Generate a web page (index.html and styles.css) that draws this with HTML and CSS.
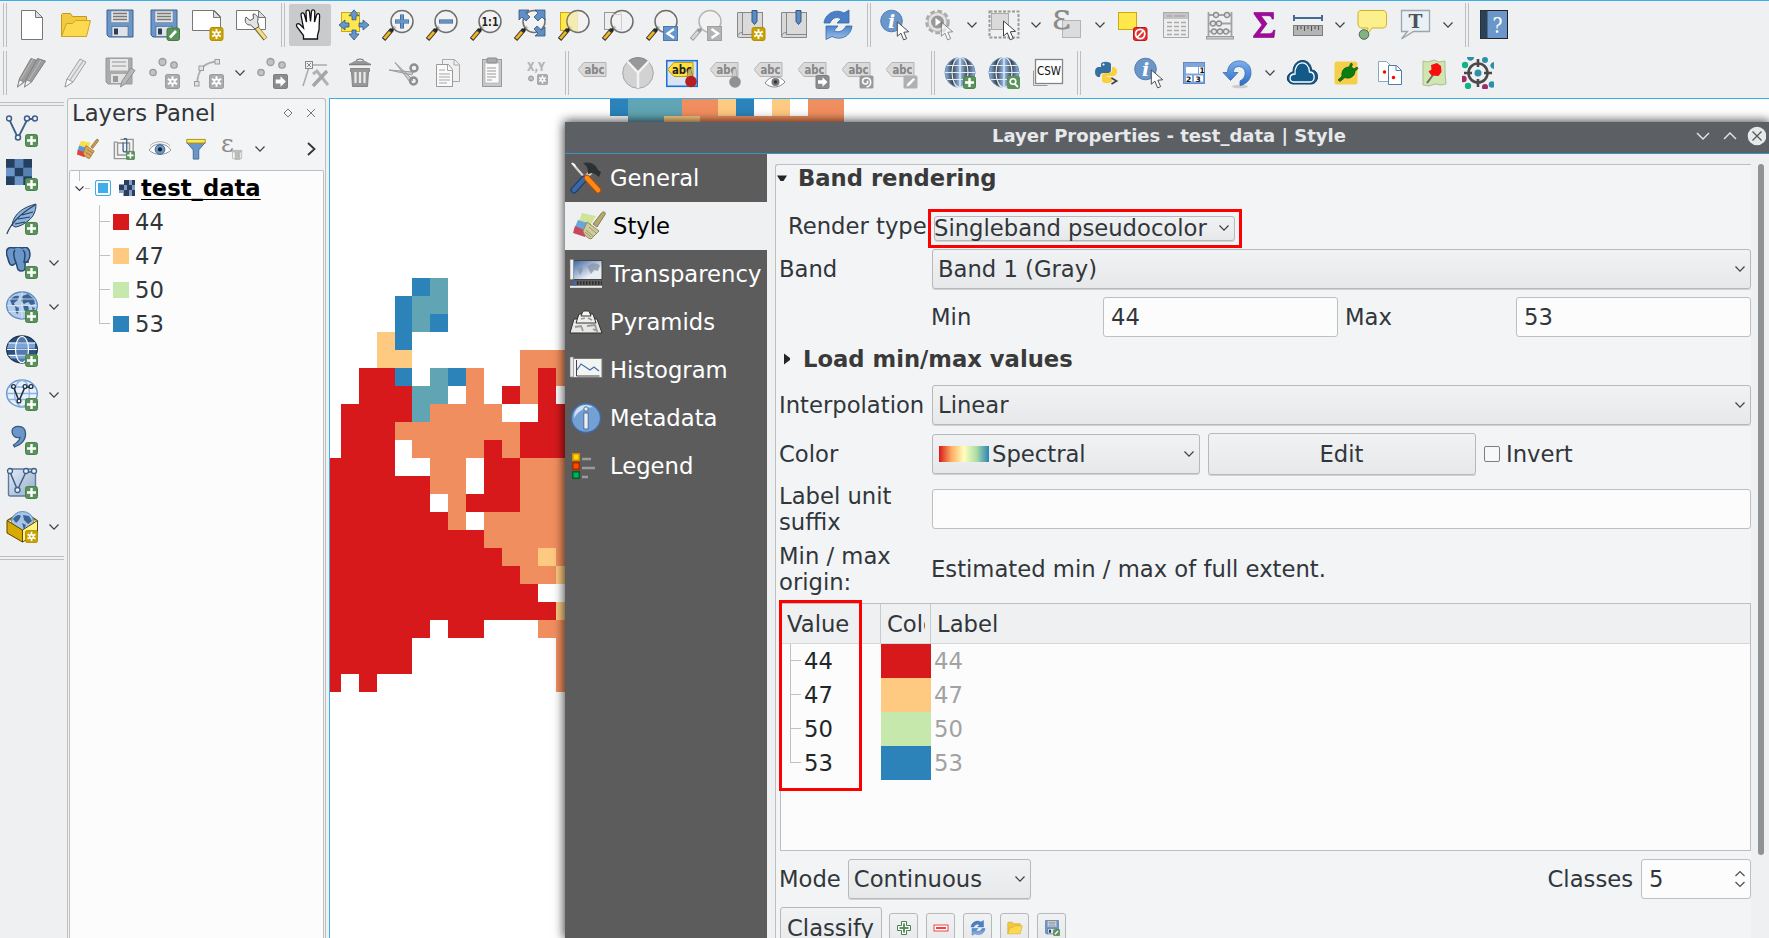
FILE: index.html
```html
<!DOCTYPE html>
<html lang="en">
<head>
<meta charset="utf-8">
<title>Layer Properties - test_data | Style</title>
<link rel="stylesheet" href="styles.css">
</head>
<body>
<svg class="gradients" aria-hidden="true">
  <defs>
    <linearGradient id="gBlue" x1="0" y1="0" x2="0" y2="1"><stop offset="0" stop-color="#4d86cc"/><stop offset="1" stop-color="#9cbce4"/></linearGradient>
    <linearGradient id="gArrow" x1="0" y1="0" x2="0" y2="1"><stop offset="0" stop-color="#7ab0ee"/><stop offset="1" stop-color="#2f6cc4"/></linearGradient>
    <linearGradient id="gGlobe" x1="0" y1="0" x2="1" y2="0"><stop offset="0" stop-color="#8fb8ea"/><stop offset=".25" stop-color="#3c4650"/><stop offset=".5" stop-color="#9cc3f0"/><stop offset=".75" stop-color="#3c4650"/><stop offset="1" stop-color="#8fb8ea"/></linearGradient>
    <linearGradient id="gPale" x1="0" y1="0" x2="1" y2="1"><stop offset="0" stop-color="#e6ecf4"/><stop offset="1" stop-color="#8fabcd"/></linearGradient>
    <linearGradient id="gMap" x1="0" y1="0" x2="1" y2="1"><stop offset="0" stop-color="#3460a4"/><stop offset=".7" stop-color="#e8edf4"/></linearGradient>
  </defs>
</svg>
<svg class="sprite" aria-hidden="true">
  <!-- badges -->
  <symbol id="b-plus" viewBox="0 0 13 13"><rect x=".5" y=".5" width="12" height="12" rx="2" fill="#5b925b" stroke="#4b824c"/><path d="M6.500 2v9M2 6.500h9" stroke="#fff" stroke-width="2.400"/></symbol>
  <symbol id="b-star" viewBox="0 0 14 14"><rect x=".5" y=".5" width="13" height="13" rx="2" fill="#c9a206" stroke="#b48f00"/><path d="M7 2v10M2.700 4.500l8.600 5M11.300 4.500l-8.600 5" stroke="#fff" stroke-width="1.800"/><circle cx="7" cy="7" r="2.800" fill="#fff"/><circle cx="7" cy="7" r="1.200" fill="#c9a206"/></symbol>
  <symbol id="b-starg" viewBox="0 0 14 14"><rect x=".5" y=".5" width="13" height="13" rx="2" fill="#adadad" stroke="#9c9c9c"/><path d="M7 2v10M2.700 4.500l8.600 5M11.300 4.500l-8.600 5" stroke="#fff" stroke-width="1.800"/><circle cx="7" cy="7" r="2.800" fill="#fff"/><circle cx="7" cy="7" r="1.200" fill="#adadad"/></symbol>
  <symbol id="b-arrow" viewBox="0 0 14 14"><rect x=".5" y=".5" width="13" height="13" rx="1.500" fill="#8c8c8c" stroke="#7e7e7e"/><path d="M2.500 5.200h4.500v-3l5 4.800-5 4.800v-3h-4.500z" fill="#fff"/></symbol>
  <symbol id="cursor" viewBox="0 0 15 21"><path d="M1 1v15l3.800-3.200 2.800 7 3.200-1.300-3-6.700 5.200-.5z" fill="#fff" stroke="#444" stroke-width="1"/></symbol>
  <symbol id="lens" viewBox="0 0 32 32"><path d="M1.500 30.500L10 20.500" stroke="#333" stroke-width="4.600"/><path d="M2.200 29.700L8 22.800" stroke="#f3b61f" stroke-width="2.800"/><path d="M9.500 21.500l4-4" stroke="#222" stroke-width="3"/><circle cx="20" cy="12.500" r="11" fill="#f2f3f3" fill-opacity=".8" stroke="#6f6f6f" stroke-width="1.500"/></symbol>
  <symbol id="chev" viewBox="0 0 12 12"><path d="M1.500 3.500L6 8.200l4.500-4.700" fill="none" stroke="#3c4044" stroke-width="1.200"/></symbol>

  <!-- first toolbar row -->
  <symbol id="i-new" viewBox="0 0 32 32"><path d="M5.500 1.500h14l7 7v22h-21z" fill="#fff" stroke="#777"/><path d="M19.500 1.500v7h7z" fill="#ddd" stroke="#777"/></symbol>
  <symbol id="i-open" viewBox="0 0 32 32"><path d="M1.500 27.500v-22l1-1h8l2 3h14v6" fill="#f2ca40" stroke="#c59a18"/><path d="M1.500 27.500l5-13h6l3-3h15l-4 16z" fill="#fcd94f" stroke="#cfa41f"/></symbol>
  <symbol id="i-save" viewBox="0 0 32 32"><path d="M3 1h26v27h-24l-2-2z" fill="#6a97cb" stroke="#3d618c"/><rect x="7" y="2" width="18" height="11.500" fill="#e4e4e4" stroke="#7c8794" stroke-width=".6"/><path d="M9 4.500h14M9 7.500h14M9 10.500h14" stroke="#777" stroke-width="1.400"/><rect x="8" y="17.500" width="16" height="10" fill="#dfe3e7" stroke="#3d618c" stroke-width=".6"/><rect x="10" y="19.500" width="4" height="6" fill="#2c3f58"/></symbol>
  <symbol id="i-saveas" viewBox="0 0 32 32"><use href="#i-save"/><rect x="19" y="19" width="12.500" height="12.500" rx="2" fill="#5b925b" stroke="#447a46"/><path d="M22 28.500l6-6.500" stroke="#fff" stroke-width="2.600"/></symbol>
  <symbol id="i-layout" viewBox="0 0 32 32"><path d="M.5 1.500h22l6 6v14h-28z" fill="#fff" stroke="#777"/><path d="M21.500 1.500v7h7z" fill="#ddd" stroke="#777"/><use href="#b-star" x="17" y="18" width="15" height="14"/></symbol>
  <symbol id="i-manager" viewBox="0 0 32 32"><path d="M.5 1.500h22l7 7v12h-29z" fill="#fff" stroke="#777"/><path d="M22.500 1.500v7h7z" fill="#ddd" stroke="#777"/><path d="M20.500 19l9 11" stroke="#7b6a35" stroke-width="5"/><path d="M20.500 18.500l9 11" stroke="#f4dd85" stroke-width="3.200"/><path d="M10 8l4 3.500 3.500-2L17 5c4 0 6 4 4.500 7.500l1.500 5-4 2.500-4.500-4C10 16.500 8 12 10 8z" fill="#e3e3e3" stroke="#555"/></symbol>
  <symbol id="i-hand" viewBox="0 0 32 32"><path d="M9.500 30v-3.500L3 18c-1.500-2.500.5-4.500 3-2.500l3.500 3.500L7 6c-.3-2.500 2.500-3 3.300-.8L12.500 13 12 3c0-2.500 3.200-2.500 3.500 0l1 9.500L17.500 2.500c.3-2.300 3.200-2.200 3.300.3l-.3 10.200L22.600 6c.6-2.200 3.300-1.600 3 .8L25 21l-1.500 5.500V30z" fill="#fff" stroke="#111" stroke-width="1.300"/></symbol>
  <symbol id="i-pan" viewBox="0 0 32 32"><rect x="3.500" y="3.500" width="18" height="19" fill="#ffe74c" stroke="#c8aa14"/><g fill="#6796cb" stroke="#2f5580" stroke-width=".8"><path d="M16 .8l5 6h-3v4h-4v-4h-3zM16 31l-5-6h3v-4h4v4h3zM1 16l6-5v3h4v4H7v3zM31 16l-6-5v3h-4v4h4v3z"/></g></symbol>
  <symbol id="i-zin" viewBox="0 0 32 32"><use href="#lens"/><path d="M20 5.500v14M13 12.500h14" stroke="#31567f" stroke-width="4"/><path d="M20 6v13M13.500 12.500h13" stroke="#6796cb" stroke-width="2.800"/></symbol>
  <symbol id="i-zout" viewBox="0 0 32 32"><use href="#lens"/><path d="M13 12.500h14" stroke="#31567f" stroke-width="4"/><path d="M13.500 12.500h13" stroke="#6796cb" stroke-width="2.800"/></symbol>
  <symbol id="i-z11" viewBox="0 0 32 32"><use href="#lens"/><text x="20" y="17" text-anchor="middle" font-family="DejaVu Sans" font-weight="bold" font-size="11.500" textLength="17" lengthAdjust="spacingAndGlyphs" fill="#222">1:1</text></symbol>
  <symbol id="i-zfull" viewBox="0 0 32 32"><use href="#lens"/><g fill="#5f8fc6" stroke="#2f5580" stroke-width=".8"><path d="M5 1h10l-3 3 4 4-4 4-4-4-3 3zM31 1v10l-3-3-4 4-4-4 4-4-3-3zM31 27H21l3-3-4-4 3-3 4.500 4 3.500-3z"/></g></symbol>
  <symbol id="i-zsel" viewBox="0 0 32 32"><rect x="2.500" y="3.500" width="17" height="18" fill="#ffe74c" stroke="#c8aa14"/><use href="#lens"/><path d="M20 2.500a10 10 0 0 0-5 19h4.500V2.500z" fill="#f4e99a" opacity=".6"/></symbol>
  <symbol id="i-zlay" viewBox="0 0 32 32"><rect x="2.500" y="3.500" width="17" height="17" fill="#eee" stroke="#999"/><use href="#lens"/><path d="M11 5.500h8.500v15" fill="none" stroke="#ccc"/></symbol>
  <symbol id="i-zlast" viewBox="0 0 32 32"><use href="#lens"/><rect x="17.500" y="17.500" width="14" height="14" fill="#6796cb" stroke="#4b79ad"/><path d="M28 20l-6.500 4.500L28 29" fill="none" stroke="#fff" stroke-width="2.400"/></symbol>
  <symbol id="i-znext" viewBox="0 0 32 32"><path d="M1.500 30.500L10 20.500" stroke="#a2a2a2" stroke-width="4.600"/><path d="M2.200 29.700L8 22.800" stroke="#d6d6d6" stroke-width="2.800"/><path d="M9.500 21.500l4-4" stroke="#999" stroke-width="3"/><circle cx="20" cy="12.500" r="11" fill="#f2f2f2" stroke="#b5b5b5" stroke-width="1.500"/><rect x="17.500" y="17.500" width="14" height="14" fill="#b3b3b3" stroke="#a0a0a0"/><path d="M21.500 20l6.500 4.500-6.500 4.500" fill="none" stroke="#fff" stroke-width="2.400"/></symbol>
  <symbol id="i-book" viewBox="0 0 32 32"><path d="M3.500 28V3.500h5v20h20v5h-23z" fill="#d8d8d8" stroke="#888"/><rect x="8.500" y="3.500" width="20" height="22" fill="#dadada" stroke="#888"/><path d="M3.500 28c0-3 2-4.500 5-4.500" fill="none" stroke="#888"/><path d="M18 1.500h5v11l-2.500 3-2.500-3z" fill="#5b8bc2" stroke="#31567f"/></symbol>
  <symbol id="i-booknew" viewBox="0 0 32 32"><use href="#i-book"/><use href="#b-star" x="17" y="18" width="15" height="14"/></symbol>
  <symbol id="i-refresh" viewBox="0 0 32 32"><path d="M2 14C3 5 13-1 22 4l5-3v13H15l4-4c-4-3-9-1-11 4z" fill="#4b80c6" stroke="#3466a8" stroke-width=".8"/><path d="M30 17c-1 10-11 15-20 10.500l-6 3V17h12l-4 4.500c5 3 10 0 12-4.500z" fill="url(#gBlue)" stroke="#3466a8" stroke-width=".8"/></symbol>
  <symbol id="i-ident" viewBox="0 0 32 32"><circle cx="11.500" cy="12" r="10.800" fill="#6a96c9" stroke="#5480b3"/><text x="11.500" y="19" text-anchor="middle" font-family="DejaVu Serif" font-style="italic" font-weight="bold" font-size="19" fill="#fff">i</text><use href="#cursor" x="16" y="12" width="15" height="20"/></symbol>
  <symbol id="i-action" viewBox="0 0 32 32"><circle cx="13.500" cy="13" r="10.500" fill="#e0e0e0" stroke="#aaa" stroke-width="3.500" stroke-dasharray="4.500 2.500"/><circle cx="13.500" cy="13" r="9.500" fill="#e4e4e4" stroke="#b5b5b5"/><circle cx="13.500" cy="13" r="6.500" fill="#999"/><path d="M11.500 9l5.500 4-5.500 4z" fill="#fff"/><g opacity=".6"><use href="#cursor" x="16" y="12" width="15" height="20"/></g></symbol>
  <symbol id="i-select" viewBox="0 0 32 32"><rect x="1.500" y="2.500" width="29" height="26" fill="none" stroke="#999" stroke-width="2" stroke-dasharray="3 1.500"/><rect x="3.500" y="4.500" width="17" height="16" fill="#dadada" stroke="#aaa"/><use href="#cursor" x="13" y="11" width="18" height="21"/></symbol>
  <symbol id="i-eps" viewBox="0 0 32 32"><rect x="10.500" y="11.500" width="18" height="17" fill="#dcdcdc" stroke="#b4b4b4"/><text x="0" y="20" font-family="DejaVu Serif" font-size="35" textLength="19" lengthAdjust="spacingAndGlyphs" fill="#8b8b8b">ε</text></symbol>
  <symbol id="i-desel" viewBox="0 0 32 32"><rect x="2.500" y="3.500" width="18" height="17" fill="#ffe74c" stroke="#c8aa14"/><rect x="17.500" y="18.500" width="13.500" height="13" rx="2" fill="#d33" stroke="#c11"/><circle cx="24.200" cy="25" r="4.600" fill="none" stroke="#fff" stroke-width="1.800"/><path d="M21.500 28l5.500-6" stroke="#fff" stroke-width="1.800"/></symbol>
  <symbol id="i-table" viewBox="0 0 32 32"><rect x="3.500" y="3.500" width="25" height="25" fill="#eee" stroke="#aaa"/><rect x="4" y="4" width="24" height="6" fill="#c4c4c4"/><path d="M7 7h5M14 7h11M7 13.500h5M14 13.500h5M21 13.500h5M7 17.500h5M14 17.500h5M21 17.500h5M7 21.500h5M14 21.500h5M21 21.500h5M7 25.500h5M14 25.500h5M21 25.500h5" stroke="#aaa" stroke-width="1.500"/></symbol>
  <symbol id="i-abacus" viewBox="0 0 32 32"><path d="M4.500 3v26M27.500 3v26M4 6h24M4 14.500h24M4 22.500h24" stroke="#a2a2a2" stroke-width="1.800"/><rect x="2.500" y="27.500" width="27" height="2.500" fill="#ccc" stroke="#999"/><g fill="#e4e4e4" stroke="#8d8d8d" stroke-width="1.300"><circle cx="12" cy="6" r="2.500"/><circle cx="23" cy="6" r="2.500"/><circle cx="9" cy="14.500" r="2.500"/><circle cx="15" cy="14.500" r="2.500"/><circle cx="10" cy="22.500" r="2.500"/><circle cx="16" cy="22.500" r="2.500"/><circle cx="22" cy="22.500" r="2.500"/></g></symbol>
  <symbol id="i-sum" viewBox="0 0 32 32"><path d="M6 3.500h19.500v6.500h-1.500c-.5-2.500-1.500-3.300-4-3.300H13l6 8-7.500 10H21c2.500 0 3.700-1 4.500-3.500H27L26 28.500H5.500V27L14 16 6 5z" fill="#a3089f" stroke="#750a72" stroke-width=".6"/></symbol>
  <symbol id="i-measure" viewBox="0 0 32 32"><path d="M2 9h28M2 6v6M30 6v6" stroke="#466a94" stroke-width="2"/><rect x="1.500" y="16.500" width="29" height="10" fill="#b4b4b4" stroke="#7e7e7e"/><path d="M5.500 17v4M9 17v3M12.500 17v5M16 17v3M19.500 17v5M23 17v3M26.500 17v4" stroke="#555"/></symbol>
  <symbol id="i-tip" viewBox="0 0 32 32"><path d="M5 1.500h22c2 0 3.500 1 3.500 4v9c0 3-1.500 4.500-4 4.500H16l-6 8 2-8H6c-2.500 0-4-1.500-4-4.500v-9c0-3 1-4 3-4z" fill="#fbf08c" stroke="#cdb02c"/><circle cx="8" cy="25.500" r="4.800" fill="#82b182" stroke="#47694a"/></symbol>
  <symbol id="i-text" viewBox="0 0 32 32"><path d="M1.500 1.500h28v21h-16l-12 7.500 6-7.500h-6z" fill="#e9f0f6" stroke="#9ba5ae" stroke-width="1.300"/><text x="15.500" y="18.500" text-anchor="middle" font-family="DejaVu Serif" font-weight="bold" font-size="19" textLength="14" lengthAdjust="spacingAndGlyphs" fill="#4d5358">T</text></symbol>
  <symbol id="i-help" viewBox="0 0 32 32"><rect x="2.500" y="1.500" width="27" height="28" fill="#6a96c9" stroke="#222"/><rect x="2.500" y="1.500" width="7" height="28" fill="#2b4257"/><text x="19.500" y="24" text-anchor="middle" font-family="DejaVu Serif" font-size="23" textLength="10" lengthAdjust="spacingAndGlyphs" fill="#fff">?</text></symbol>

  <!-- second toolbar row -->
  <symbol id="i-pencil" viewBox="0 0 32 32"><path d="M5 30l2-8L20 2l6 3-13 20z" fill="#e6e6e6" stroke="#a0a0a0"/><path d="M5 30l2-8 6 3z" fill="#fff" stroke="#a0a0a0"/><path d="M10 23L23 4" stroke="#b5b5b5" stroke-width="1.300"/></symbol>
  <symbol id="i-pencils" viewBox="0 0 32 32"><g fill="#9c9c9c" stroke="#808080"><path d="M1.500 30l2-8.500L15 1.500l6 2-12 21z"/><path d="M8.500 30l2-8.500L21.500 1.500l8 2.500L15.500 25z"/></g><path d="M13 23L25 3M5 22L17 2" stroke="#bbb"/><path d="M1.500 30l2-7 4 2zM8.500 30l2-7 5 2z" fill="#f4f4f4" stroke="#808080" stroke-width=".7"/></symbol>
  <symbol id="i-saveg" viewBox="0 0 32 32"><path d="M2 1h26v26H4l-2-2z" fill="#ababab" stroke="#999"/><rect x="6" y="2" width="18" height="11.500" fill="#e8e8e8"/><path d="M8 5h14M8 9h14" stroke="#b0b0b0" stroke-width="1.400"/><rect x="7" y="17" width="16" height="9" fill="#e2e2e2"/><rect x="9" y="19" width="5" height="6" fill="#999"/><path d="M16.500 30l1.500-6 9-13 4 2.500-9.500 13z" fill="#b8b8b8" stroke="#909090"/></symbol>
  <symbol id="i-pts" viewBox="0 0 32 32"><g fill="#c2c2c2" stroke="#9b9b9b" stroke-width="1.300"><circle cx="14.500" cy="5" r="3.500"/><circle cx="26" cy="8" r="3.200"/><circle cx="5" cy="15.500" r="3.200"/></g></symbol>
  <symbol id="i-addpt" viewBox="0 0 32 32"><use href="#i-pts"/><use href="#b-starg" x="17" y="17" width="15" height="15"/></symbol>
  <symbol id="i-movept" viewBox="0 0 32 32"><use href="#i-pts"/><use href="#b-arrow" x="17" y="17" width="15" height="15"/></symbol>
  <symbol id="i-curve" viewBox="0 0 32 32"><path d="M5 27C6 12 12 5 26 4.500" fill="none" stroke="#b0b0b0" stroke-width="1.800"/><g fill="#e2e2e2" stroke="#9b9b9b"><rect x="2.500" y="24.500" width="4.500" height="4.500"/><rect x="7" y="9" width="4.500" height="4.500"/><rect x="23" y="2.500" width="4.500" height="4.500"/></g><use href="#b-starg" x="17" y="17" width="15" height="15"/></symbol>
  <symbol id="i-node" viewBox="0 0 32 32"><path d="M10 8h17M9 10L3 29" stroke="#aaa" stroke-width="1.500"/><rect x="5.500" y="4.500" width="7" height="7" fill="#eee" stroke="#888"/><path d="M7 6l4 4M11 6l-4 4" stroke="#888"/><path d="M13 17l4-3 3 4 8 10" fill="none" stroke="#b2b2b2" stroke-width="3"/><path d="M27 14L13 29" stroke="#a5a5a5" stroke-width="3.500"/></symbol>
  <symbol id="i-trash" viewBox="0 0 32 32"><path d="M5.500 7l5-3h11l5 3z" fill="#999"/><path d="M12.500 4c0-2.500 7-2.500 7 0M5 7.500h22" fill="none" stroke="#808080" stroke-width="1.400"/><path d="M6.500 11.500h19v3h-1l-1 15h-15l-1-15h-1z" fill="#989898" stroke="#858585"/><path d="M11.500 15v11M16 15v11M20.500 15v11" stroke="#e9e9e9" stroke-width="2.200"/></symbol>
  <symbol id="i-cut" viewBox="0 0 32 32"><path d="M1 13l24 2-1 3zM7 5.500L25 23l-3 2z" fill="#ccc" stroke="#9c9c9c"/><circle cx="26" cy="11" r="3.500" fill="none" stroke="#8f8f8f" stroke-width="2.400"/><circle cx="25.500" cy="24" r="3.500" fill="none" stroke="#8f8f8f" stroke-width="2.400"/></symbol>
  <symbol id="i-copy" viewBox="0 0 32 32"><path d="M10.500 2.500h12l5 5v17h-17z" fill="#f0f0f0" stroke="#aaa"/><path d="M22 2.500V8h5.500" fill="none" stroke="#aaa"/><path d="M4.500 7.500h12l4 5v17h-16z" fill="#fafafa" stroke="#999"/><path d="M15.500 8v5.500h5M7 13h6M7 17h11M7 20h11M7 23h11M7 26h8" fill="none" stroke="#a5a5a5"/></symbol>
  <symbol id="i-paste" viewBox="0 0 32 32"><rect x="6.500" y="2.500" width="19" height="27" fill="#c8c8c8" stroke="#999"/><rect x="9" y="6" width="14" height="20" fill="#fafafa" stroke="#aaa" stroke-width=".6"/><rect x="11" y="1" width="10" height="5" rx="1" fill="#aaa" stroke="#8a8a8a"/><path d="M11 11h9M11 14h9M11 17h9M11 20h9M11 23h5" stroke="#999"/></symbol>
  <symbol id="i-xy" viewBox="0 0 32 32"><text x="16" y="14" text-anchor="middle" font-family="DejaVu Sans" font-size="13" font-weight="bold" textLength="18" lengthAdjust="spacingAndGlyphs" fill="#b2b2b2">X,Y</text><circle cx="11" cy="21.500" r="2.500" fill="#bdbdbd" stroke="#999"/><use href="#b-starg" x="17" y="17" width="11" height="11"/></symbol>
  <symbol id="tag" viewBox="0 0 32 32"><path d="M0 12.500L6 5.500h22v14H6z" fill="#dadada" stroke="#b5b5b5"/><text x="16.500" y="16.500" text-anchor="middle" font-family="DejaVu Sans" font-weight="bold" font-size="11.500" textLength="20" lengthAdjust="spacingAndGlyphs" fill="#858585">abc</text></symbol>
  <symbol id="i-pie" viewBox="0 0 32 32"><circle cx="16" cy="16" r="15.300" fill="#d2d2d2" stroke="#a5a5a5"/><path d="M16 14L6.500 4C12-.5 20-.5 25.500 4z" fill="#999" stroke="#888"/><path d="M16 31V15.500L5.500 4.500M16 15.500L26.500 4.500" fill="none" stroke="#f3f3f3" stroke-width="2.500"/></symbol>
  <symbol id="i-tagpin" viewBox="0 0 32 32"><rect x=".7" y="3.700" width="30.600" height="25.600" fill="#d9e4f3" stroke="#1b6fd8" stroke-width="1.600"/><path d="M1.500 12.500L8 5.500h19v14H8z" fill="#ffe03c" stroke="#bd9c10"/><text x="6" y="16.500" font-family="DejaVu Sans" font-weight="bold" font-size="11.500" textLength="20" lengthAdjust="spacingAndGlyphs" fill="#222">abc</text><path d="M21 21l1-8 3-.5 2 8z" fill="#c4b25a" stroke="#666" stroke-width=".6"/><circle cx="25" cy="24.500" r="5.800" fill="#b51f22"/></symbol>
  <symbol id="i-tagping" viewBox="0 0 32 32"><use href="#tag"/><path d="M22 20l1-8 3-.5 1 8z" fill="#ccc" stroke="#999" stroke-width=".6"/><circle cx="25" cy="25" r="5.800" fill="#919191"/></symbol>
  <symbol id="i-tageye" viewBox="0 0 32 32"><use href="#tag"/><path d="M11 26c5-8 15-8 20-1-5 6-14 7-20 1z" fill="#fff" stroke="#8a8a8a"/><circle cx="21.500" cy="25" r="4" fill="#777"/><circle cx="21.500" cy="25" r="1.700" fill="#333"/></symbol>
  <symbol id="i-tagmove" viewBox="0 0 32 32"><use href="#tag"/><use href="#b-arrow" x="17" y="18" width="15" height="14"/></symbol>
  <symbol id="i-tagrot" viewBox="0 0 32 32"><use href="#tag"/><rect x="17.500" y="18.500" width="14" height="13" rx="1.500" fill="#999"/><path d="M24.500 30c6-1 5-9 0-9-5 0-5 6-1 6 2 0 3-2 1.500-3" fill="none" stroke="#fff" stroke-width="1.600"/></symbol>
  <symbol id="i-tagedit" viewBox="0 0 32 32"><use href="#tag"/><rect x="17.500" y="18.500" width="14" height="13" rx="1.500" fill="#b0b0b0"/><path d="M20.500 29.500l1-3 6-5.500 1.500 1.500-5.500 6z" fill="#fff"/></symbol>
  <symbol id="globe" viewBox="0 0 32 32"><circle cx="16" cy="15.500" r="15" fill="url(#gGlobe)" stroke="#6f8fb5"/><path d="M3 8.500h26M1 15.500h30M3 22.500h26M16 .5v30" stroke="#e2ecf7" stroke-width="1.200"/><ellipse cx="16" cy="15.500" rx="8" ry="15" fill="none" stroke="#e2ecf7" stroke-width="1.200"/></symbol>
  <symbol id="i-globeadd" viewBox="0 0 32 32"><use href="#globe"/><use href="#b-plus" x="19" y="19" width="13" height="13"/></symbol>
  <symbol id="i-globefind" viewBox="0 0 32 32"><use href="#globe"/><rect x="19" y="19" width="13" height="13" rx="2" fill="#5b925b"/><circle cx="25" cy="24.500" r="2.800" fill="none" stroke="#fff" stroke-width="1.600"/><path d="M27 27l3 3" stroke="#fff" stroke-width="1.800"/></symbol>
  <symbol id="i-csw" viewBox="0 0 32 32"><path d="M1.500 13.500v15h14" fill="none" stroke="#999"/><rect x="3.500" y="2.500" width="27" height="24" fill="#fff" stroke="#858585" stroke-width="1.300"/><text x="17" y="18" text-anchor="middle" font-family="DejaVu Sans" font-size="12.500" textLength="24" lengthAdjust="spacingAndGlyphs" fill="#111">CSW</text></symbol>
  <symbol id="i-py" viewBox="0 0 32 32"><path d="M11 10V7c0-3 9-3 10 0v6c0 2-1 3-3 3h-5c-2 0-3 1-3 4H8c-4-1-4-9 0-10h9" fill="#35709f"/><circle cx="13.500" cy="7.500" r="1.100" fill="#fff"/><path d="M22 10h2c4 1 4 8 0 9h-7v1h5v4c-1 3-9 3-10 0v-5c0-2 1-3 3-3h4c2 0 3-1 3-3z" fill="#fbcf3e"/><path d="M21.500 21l5 3-5 3" fill="none" stroke="#444" stroke-width="1.800"/></symbol>
  <symbol id="i-calc" viewBox="0 0 32 32"><rect x="5.500" y="5.500" width="21" height="21" fill="#7fa5db" stroke="#6488c0"/><rect x="8" y="10" width="12" height="6.500" fill="#fff"/><rect x="21" y="10" width="5" height="6.500" fill="#fff"/><rect x="8" y="18.500" width="6" height="6" fill="#fff"/><rect x="16" y="18.500" width="9" height="6" fill="#fff"/><g font-family="DejaVu Sans" font-weight="bold" font-size="7.500" fill="#111"><text x="21.500" y="16">1</text><text x="8" y="24.500">2</text><text x="17.500" y="24.500">3</text></g></symbol>
  <symbol id="i-undo" viewBox="0 0 32 32"><ellipse cx="18" cy="29.500" rx="8" ry="1.800" fill="#ccc"/><path d="M1 15.500h4.500C5.500 0 29 0 29 15.500c0 7-5 12-11 13v-4.500c7-3 7-13.500-.5-14.500-5 0-6 3-6 6H16l-7.500 8z" fill="url(#gArrow)" stroke="#3a6cb4" stroke-width=".8"/></symbol>
  <symbol id="i-cloud" viewBox="0 0 32 32"><path d="M7 27c-8-1-7-11 0-12C7 0 25 0 25.500 13c8 0 8 13 0 14z" fill="#135a89" stroke="#0f3f63" stroke-width="1"/><path d="M7.500 25c-5-1-4.500-8 1.500-8C8 3 23 2 23.500 15c6 0 6 9 1 10z" fill="#135a89" stroke="#fff" stroke-width="1.300"/></symbol>
  <symbol id="i-plug" viewBox="0 0 32 32"><rect x="4.500" y="4.500" width="23" height="23" rx="2.500" fill="#f4cf4a"/><path d="M8 23l4-4c-1-6 3-9 7-9l2-4 1.500 1-1 3 2.500 2 3-2 1 1.500-3 3c0 5-6 8-10 6l-5 4z" fill="#0a7d13" stroke="#073e0a" stroke-width=".6"/></symbol>
  <symbol id="i-files" viewBox="0 0 32 32"><g fill="#fff" stroke="#4c7ea8"><path d="M4.500 4.500h8l4 4v16h-12z" stroke="#8ab"/><path d="M14.500 8.500h8l5 5v14h-13z"/></g><path d="M22 8.500v5h5.500" fill="none" stroke="#4c7ea8"/><circle cx="10.500" cy="15" r="1.700" fill="#f00"/><circle cx="19.500" cy="20.500" r="1.700" fill="#f00"/></symbol>
  <symbol id="i-pin" viewBox="0 0 32 32"><path d="M5 4l5 1 6-2 5 2 6-1v11l1 12-5 1-6-1-6 2-6-1z" fill="#cfe6b0" stroke="#a9bf92"/><path d="M9 26l6-8" stroke="#666" stroke-width="1.800"/><path d="M13 8l6-2 4 3 .5 6-3 4-7-.5-3-4 3-2z" fill="#f60d0d"/></symbol>
  <symbol id="i-target" viewBox="0 0 32 32"><circle cx="16" cy="16" r="9.500" fill="none" stroke="#4a4a4a" stroke-width="2.600"/><path d="M16 2v8M16 22v8M2 16h8M22 16h8" stroke="#4a4a4a" stroke-width="2.600"/><circle cx="16" cy="16" r="3.500" fill="#2f8fa8"/><path d="M5 0h7c0 5-7 5-7 0zM32 5v7c-5-1-5-6 0-7z" fill="#2f8fa8"/><circle cx="23" cy="3" r="3" fill="#2f8fa8"/><circle cx="30" cy="27.500" r="3.300" fill="#2f8fa8"/><circle cx="3" cy="8" r="3.200" fill="#0fb28b"/><circle cx="6" cy="29" r="3.200" fill="#0fb28b"/><circle cx="1.500" cy="22" r="3.200" fill="#a22b62"/><circle cx="23" cy="30" r="3" fill="#a22b62"/></symbol>

  <!-- side toolbar -->
  <symbol id="vec" viewBox="0 0 32 32"><path d="M3 4l9 19L21.500 4H29" fill="none" stroke="#3e5f84" stroke-width="1.800"/><g fill="#eef" stroke="#3e5f84" stroke-width="1.500"><circle cx="3" cy="3.500" r="2.500"/><circle cx="12" cy="22.500" r="2.500"/><circle cx="21" cy="3.500" r="2.500"/><circle cx="29" cy="3.500" r="2.500"/></g></symbol>
  <symbol id="i-vec" viewBox="0 0 32 32"><use href="#vec"/><use href="#b-plus" x="19" y="19" width="13" height="13"/></symbol>
  <symbol id="i-rast" viewBox="0 0 26 26"><path fill="#6b96c9" d="M0 0h26v26H0z"/><path fill="#25405f" d="M0 0h8.700v8.700H0zM17.300 0H26v8.700h-8.700zM8.700 8.700h8.600v8.600H8.700zM0 17.300h8.700V26H0zM17.300 17.300H26V26h-8.700z"/><path fill="#3f6794" d="M8.700 0h8.600v8.700H8.700zM17.300 8.700H26v8.600h-8.700z" opacity=".45"/></symbol>
  <symbol id="i-rastadd" viewBox="0 0 32 32"><use href="#i-rast" width="26" height="26"/><use href="#b-plus" x="19" y="19" width="13" height="13"/></symbol>
  <symbol id="i-rastsm" viewBox="0 0 16 16"><path fill="#7f9fc9" d="M0 0h16v16H0z"/><path fill="#2c3e5c" d="M5 0h5v5H5zM13 0h3v5h-3zM0 5h5v5H0zM8 5h5v5H8zM5 10h5v6H5zM13 10h3v6h-3z"/><path fill="#fcfcfc" d="M0 0h5v4H0zM0 13h4v3H0z"/></symbol>
  <symbol id="i-feather" viewBox="0 0 32 32"><path d="M6 22C8 10 18 4 30 1c0 8-3 13-8 17-4 3-9 6-13 6z" fill="#8db2dd" stroke="#27415e"/><path d="M.8 31C5 20 14 11 29 2M9 21l10-2M12 16l12-2M16 12l11-3" fill="none" stroke="#27415e" stroke-width="1.200"/><use href="#b-plus" x="19" y="19" width="13" height="13"/></symbol>
  <symbol id="i-pg" viewBox="0 0 32 32"><path d="M8 1C1-1-1 4 1.500 10 3 16 4 19 7 18l3-2c2 4 0 8 6 8 4 0 3-5 3-8 3-1 5-5 5-9 0-5-3-8-8-6-2-1-6-1-8 0z" fill="#6b96c9" stroke="#27486e" stroke-width="1.500"/><path d="M9 3c-3 4 0 10 1 13M17 3c4 3 1 10 1 13M19 15h4" fill="none" stroke="#27486e" stroke-width="1.500"/><use href="#b-plus" x="19" y="19" width="13" height="13"/></symbol>
  <symbol id="world" viewBox="0 0 32 32"><ellipse cx="16" cy="14.500" rx="15.300" ry="13.500" fill="#b4cdea" stroke="#5d8bc2" stroke-width="1.400"/><path d="M4 9c3-4 6-5 9-4l-1 4-4 3 1 3-3-1zM9 15l4 2-1 6-2-1zM16 5l6-2 6 5 1 5-4 1-3-3-4 2-3-3zM17 14l5 1 1 3-3 5-2-5zM26 16l3 1-2 4z" fill="#3d6594"/><path d="M2.500 8h27M1 14.500h30M2.500 20.500h27M16 1v27" stroke="#dbe8f6" stroke-width=".8"/></symbol>
  <symbol id="i-world" viewBox="0 0 32 32"><use href="#world"/><use href="#b-plus" x="19" y="19" width="13" height="13"/></symbol>
  <symbol id="i-wms" viewBox="0 0 32 32"><ellipse cx="16" cy="14.500" rx="15.300" ry="13.500" fill="#2c5180" stroke="#1f3650" stroke-width="1.400"/><path d="M3 7.500h26v6H1zM2 19.500h28l-3 4H5z" fill="#7ba4d6"/><path d="M2.500 8h27M1 14.500h30M2.500 20.500h27" stroke="#fff" stroke-width="1.200"/><ellipse cx="16" cy="14.500" rx="6.500" ry="13" fill="#7ba4d6" fill-opacity=".5" stroke="#fff" stroke-width="1.200"/><use href="#b-plus" x="19" y="19" width="13" height="13"/></symbol>
  <symbol id="i-wfs" viewBox="0 0 32 32"><ellipse cx="16" cy="14.500" rx="15.300" ry="13.500" fill="#eaf1fa" stroke="#6b9bd6" stroke-width="1.500"/><path d="M2.500 8h27M1 14.500h30M2.500 20.500h27" stroke="#8eb3e0" stroke-width="1.300"/><ellipse cx="16" cy="14.500" rx="7.500" ry="13" fill="none" stroke="#8eb3e0" stroke-width="1.300"/><path d="M7.500 8l5.500 14L19 8h6" fill="none" stroke="#1d2f42" stroke-width="1.600"/><g fill="#fff" stroke="#1d2f42" stroke-width="1.300"><circle cx="7.500" cy="7.500" r="1.900"/><circle cx="13" cy="22" r="1.900"/><circle cx="19" cy="7.500" r="1.900"/><circle cx="25" cy="7.500" r="1.900"/></g><use href="#b-plus" x="19" y="19" width="13" height="13"/></symbol>
  <symbol id="i-comma" viewBox="0 0 32 32"><path d="M6 8c0-6 13-7 13.500 2C20 17 15 22 8.500 24l-1-2c3-2 6-4 6.500-7.500-5 1-8-2-8-6.500z" fill="#6b96c9" stroke="#35587f" stroke-width="1.300"/><use href="#b-plus" x="19" y="19" width="13" height="13"/></symbol>
  <symbol id="i-shape" viewBox="0 0 32 32"><rect x="2.500" y="2" width="27" height="27" rx="2" fill="url(#gPale)" stroke="#5a7ba2" stroke-width="1.400"/><path d="M4 5l7.500 18L20 5h9" fill="none" stroke="#3e5f84" stroke-width="1.500"/><g fill="#eef" stroke="#3e5f84" stroke-width="1.300"><circle cx="4" cy="4" r="2.500"/><circle cx="11.500" cy="23" r="2.500"/><circle cx="20" cy="4" r="2.500"/><circle cx="28" cy="4" r="2.500"/></g><use href="#b-plus" x="19" y="19" width="13" height="13"/></symbol>
  <symbol id="i-box" viewBox="0 0 32 32"><path d="M1 9.500L10 4h13l8.500 5.500" fill="#a88500" stroke="#594600"/><ellipse cx="16.500" cy="10.500" rx="11" ry="10" fill="#a8c5e8" stroke="#5d8bc2"/><path d="M7 8c3-4 6-5 8-3l-2 4-3 3zM17 4l6 1 3 5-4 3-4-4zM16 12l4 2-2 5z" fill="#3d6594"/><path d="M1 9.500L16.500 19v12L1 22z" fill="#d8aa00" stroke="#594600"/><path d="M31.500 9.500L16.500 19v12l15-9z" fill="#fff387" stroke="#594600"/><use href="#b-star" x="19" y="19" width="13" height="13"/></symbol>

  <!-- layers panel -->
  <symbol id="i-brush" viewBox="0 0 32 32"><path d="M6 4l14 3-4 8-13-4z" fill="#f6e04b"/><path d="M3 11l13 4-4 6-11-3z" fill="#5b9ade"/><path d="M1 17l12 4-2 7-11-4z" fill="#e2403c"/><path d="M20 13L28 2.500c2-1.500 4 0 3 2L23 15z" fill="#c79a51" stroke="#8c6425"/><path d="M13 11l12 8-7 11c-4-1-8-4-9-8z" fill="#d6a85c" stroke="#916a2b"/><path d="M13 21l8 5M15 17l8 5" stroke="#916a2b"/></symbol>
  <symbol id="i-group" viewBox="0 0 24 24"><path d="M5 4.500H1.500v18H15M8 1.500h14v14M5 5.500h13v13H5z" fill="none" stroke="#969696" stroke-width="1.500"/><path d="M11 5v8c0 3 4 3 4 0V2c0-2-3-2-3 0" fill="none" stroke="#3e5f84" stroke-width="1.400"/><use href="#b-plus" x="14" y="14" width="10" height="10"/></symbol>
  <symbol id="i-eye" viewBox="0 0 24 24"><path d="M0 13c6-8.500 18-8.500 24 0-6 6.500-18 6.500-24 0z" fill="#fff" stroke="#8a8a8a"/><circle cx="12" cy="12.500" r="5.300" fill="#6b96c9" stroke="#3e5f84"/><circle cx="12" cy="12.500" r="2.300" fill="#16263a"/><path d="M1 8.500c5-6 17-6 22 0" fill="none" stroke="#aaa"/></symbol>
  <symbol id="i-funnel" viewBox="0 0 24 24"><path d="M2 5h20l-7 8v10h-6V13z" fill="#6b96c9" stroke="#43678f"/><rect x="2" y="1.500" width="20" height="4" fill="#ffe74c" stroke="#a38d1c"/></symbol>
  <symbol id="i-epsf" viewBox="0 0 24 24"><text x="0" y="15.500" font-family="DejaVu Serif" font-size="26" textLength="14" lengthAdjust="spacingAndGlyphs" fill="#8b8b8b">ε</text><path d="M12 13h11v2l-2 1v8h-6v-8l-3-1z" fill="#bbb"/><path d="M12.500 13.500h10v9h-10z" fill="none" stroke="#bbb"/></symbol>

  <!-- properties navigation -->
  <symbol id="i-tools" viewBox="0 0 32 32"><path d="M2 1l13 15" stroke="#d6d6d6" stroke-width="2.200"/><path d="M1 1l4 1 1.500 4z" fill="#fff"/><path d="M21 10l-6 6" stroke="#ccc" stroke-width="4"/><path d="M13 1c8-2 13 2 15 7l3 2-2 5-4-3-3-1-4 1c0-5 0-7-5-11z" fill="#2c3233"/><path d="M14 17L4 28" stroke="#1d3c6c" stroke-width="7" stroke-linecap="round"/><path d="M14 17L4 28" stroke="#3c69a5" stroke-width="4.500" stroke-linecap="round"/><path d="M17 16l11 12" stroke="#b84d00" stroke-width="6.500" stroke-linecap="round"/><path d="M17 16l11 12" stroke="#ff8a18" stroke-width="4.500" stroke-linecap="round"/></symbol>
  <symbol id="i-style" viewBox="0 0 34 32"><path d="M10 3l14 3-5 8-12-3z" fill="#cfe39a"/><path d="M6 10l13 4-4 7-12-4z" fill="#68a6dc"/><path d="M3 16l12 5-2 6-12-4z" fill="#c9475a"/><path d="M21 14L30 2.500c2-1.500 4 0 3 2L25 17z" fill="#b5aa72" stroke="#857b4b"/><path d="M15 12l12 9-8 8c-4-1-7-4-8-8z" fill="#cfcb9d" stroke="#8e8a5c"/><path d="M14 20l7 6M17 17l7 6M13 22l6 5" stroke="#9b976a"/></symbol>
  <symbol id="i-transp" viewBox="0 0 34 32"><rect x="3" y="2.500" width="30" height="19" fill="url(#gMap)" stroke="#444"/><path d="M8 10l5-2 1 4-3 5zM18 8l7-3 6 2-2 6-4-1-3 4z" fill="#8793a3" opacity=".75"/><rect x="1" y="1.500" width="3.500" height="20" fill="#f2f2f2" stroke="#777" stroke-width=".6"/><path d="M5 25h28" stroke="#2d2d2d" stroke-width="3.500" stroke-dasharray="1.500 1.500"/><path d="M1 28.800h32" stroke="#eee" stroke-width="2"/><rect x="4.500" y="23" width="2.500" height="4.500" fill="#3c6ab5"/></symbol>
  <symbol id="i-pyr" viewBox="0 0 34 32"><path d="M5 13h23l5 14H1z" fill="#e8e8e4" stroke="#333"/><path d="M10 8h14l3 9H7z" fill="#efefec" stroke="#333"/><path d="M14 5h6l2 5H12z" fill="#f4f4f2" stroke="#333"/><path d="M6 21l6-1 2 5M18 20l8-1 2 6-4-2M12 13l4-1M19 12l4 2" fill="none" stroke="#999" stroke-width="1.800"/></symbol>
  <symbol id="i-hist" viewBox="0 0 34 32"><rect x="3" y="4.500" width="30" height="19" fill="#f3f5f2" stroke="#777"/><rect x="1" y="3" width="3.500" height="20" fill="#e8e8e8" stroke="#777" stroke-width=".6"/><path d="M7.500 6v16h23" fill="none" stroke="#444"/><path d="M8 16l4-6 9 6 4-3 5 4" fill="none" stroke="#4a6ea8" stroke-width="1.200"/></symbol>
  <symbol id="i-info" viewBox="0 0 32 32"><circle cx="16" cy="16" r="14.500" fill="#74a0d4" stroke="#3e6aa6" stroke-width="1.300"/><path d="M4 16C4 8 9 3 16 3c3 0 5 1 7 2C12 6 7 11 4 16z" fill="#d2e1f2"/><circle cx="16" cy="7" r="2.200" fill="#eee" stroke="#4a6fa0"/><rect x="13.800" y="11" width="4.400" height="16" fill="#eee" stroke="#4a6fa0"/></symbol>
  <symbol id="i-legend" viewBox="0 0 32 32"><g stroke-width="1.500"><rect x="2.800" y="3.800" width="6.500" height="6.500" fill="#ffd800" stroke="#d88a00"/><rect x="2.800" y="12.800" width="6.500" height="6.500" fill="#ff4a00" stroke="#a82c00"/><rect x="2.800" y="21.800" width="6.500" height="6.500" fill="#00b451" stroke="#0a5830"/></g><path d="M12 9h9M12 18h13M12 27h6" stroke="#9b9b9b" stroke-width="2.600"/></symbol>
  <symbol id="i-add" viewBox="0 0 16 16"><path d="M5.500 1.500h5v4h4v5h-4v4h-5v-4h-4v-5h4z" fill="#fff" stroke="#4b824c"/><path d="M8 3.500v9M3.500 8h9" stroke="#5b925b" stroke-width="2"/></symbol>
  <symbol id="i-rem" viewBox="0 0 16 16"><rect x="1" y="5" width="14" height="6" fill="#fff" stroke="#e44"/><path d="M3 8h10" stroke="#e44" stroke-width="2"/></symbol>
</svg>

<div class="window">
  <div class="toolbars">
    <div class="toolrow">
      <i class="grip first"></i>
      <span class="tb"><svg><use href="#i-new"/></svg></span><span class="tb"><svg><use href="#i-open"/></svg></span><span class="tb"><svg><use href="#i-save"/></svg></span><span class="tb"><svg><use href="#i-saveas"/></svg></span><span class="tb"><svg><use href="#i-layout"/></svg></span><span class="tb"><svg><use href="#i-manager"/></svg></span>
      <i class="grip"></i>
      <span class="tb active"><svg><use href="#i-hand"/></svg></span><span class="tb"><svg><use href="#i-pan"/></svg></span><span class="tb"><svg><use href="#i-zin"/></svg></span><span class="tb"><svg><use href="#i-zout"/></svg></span><span class="tb"><svg><use href="#i-z11"/></svg></span><span class="tb"><svg><use href="#i-zfull"/></svg></span><span class="tb"><svg><use href="#i-zsel"/></svg></span><span class="tb"><svg><use href="#i-zlay"/></svg></span><span class="tb"><svg><use href="#i-zlast"/></svg></span><span class="tb"><svg><use href="#i-znext"/></svg></span><span class="tb"><svg><use href="#i-booknew"/></svg></span><span class="tb"><svg><use href="#i-book"/></svg></span><span class="tb"><svg><use href="#i-refresh"/></svg></span>
      <i class="grip"></i>
      <span class="tb"><svg><use href="#i-ident"/></svg></span><span class="tb"><svg><use href="#i-action"/></svg></span><svg class="drop"><use href="#chev"/></svg><span class="tb"><svg><use href="#i-select"/></svg></span><svg class="drop"><use href="#chev"/></svg><span class="tb"><svg><use href="#i-eps"/></svg></span><svg class="drop"><use href="#chev"/></svg><span class="tb"><svg><use href="#i-desel"/></svg></span><span class="tb"><svg><use href="#i-table"/></svg></span><span class="tb"><svg><use href="#i-abacus"/></svg></span><span class="tb"><svg><use href="#i-sum"/></svg></span><span class="tb"><svg><use href="#i-measure"/></svg></span><svg class="drop"><use href="#chev"/></svg><span class="tb"><svg><use href="#i-tip"/></svg></span><span class="tb"><svg><use href="#i-text"/></svg></span><svg class="drop"><use href="#chev"/></svg>
      <i class="grip"></i>
      <span class="tb"><svg><use href="#i-help"/></svg></span>
    </div>
    <div class="toolrow">
      <i class="grip first"></i>
      <span class="tb"><svg><use href="#i-pencils"/></svg></span><span class="tb"><svg><use href="#i-pencil"/></svg></span><span class="tb"><svg><use href="#i-saveg"/></svg></span><span class="tb"><svg><use href="#i-addpt"/></svg></span><span class="tb"><svg><use href="#i-curve"/></svg></span><svg class="drop"><use href="#chev"/></svg><span class="tb"><svg><use href="#i-movept"/></svg></span><span class="tb"><svg><use href="#i-node"/></svg></span><span class="tb"><svg><use href="#i-trash"/></svg></span><span class="tb"><svg><use href="#i-cut"/></svg></span><span class="tb"><svg><use href="#i-copy"/></svg></span><span class="tb"><svg><use href="#i-paste"/></svg></span><span class="tb"><svg><use href="#i-xy"/></svg></span>
      <i class="grip"></i>
      <span class="tb"><svg><use href="#tag"/></svg></span><span class="tb"><svg><use href="#i-pie"/></svg></span><span class="tb"><svg><use href="#i-tagpin"/></svg></span><span class="tb"><svg><use href="#i-tagping"/></svg></span><span class="tb"><svg><use href="#i-tageye"/></svg></span><span class="tb"><svg><use href="#i-tagmove"/></svg></span><span class="tb"><svg><use href="#i-tagrot"/></svg></span><span class="tb"><svg><use href="#i-tagedit"/></svg></span>
      <i class="grip"></i>
      <span class="tb"><svg><use href="#i-globeadd"/></svg></span><span class="tb"><svg><use href="#i-globefind"/></svg></span><span class="tb"><svg><use href="#i-csw"/></svg></span>
      <i class="grip"></i>
      <span class="tb"><svg><use href="#i-py"/></svg></span><span class="tb"><svg><use href="#i-ident"/></svg></span><span class="tb"><svg><use href="#i-calc"/></svg></span><span class="tb"><svg><use href="#i-undo"/></svg></span><svg class="drop"><use href="#chev"/></svg><span class="tb"><svg><use href="#i-cloud"/></svg></span><span class="tb"><svg><use href="#i-plug"/></svg></span><span class="tb"><svg><use href="#i-files"/></svg></span><span class="tb"><svg><use href="#i-pin"/></svg></span><span class="tb"><svg><use href="#i-target"/></svg></span>
    </div>
  </div>

  <div class="workspace">
    <div class="sidetools">
      <i class="hgrip"></i>
      <span class="tb"><svg><use href="#i-vec"/></svg></span>
      <span class="tb"><svg><use href="#i-rastadd"/></svg></span>
      <span class="tb"><svg><use href="#i-feather"/></svg></span>
      <div class="pair"><span class="tb"><svg><use href="#i-pg"/></svg></span><svg class="drop"><use href="#chev"/></svg></div>
      <div class="pair"><span class="tb"><svg><use href="#i-world"/></svg></span><svg class="drop"><use href="#chev"/></svg></div>
      <span class="tb"><svg><use href="#i-wms"/></svg></span>
      <div class="pair"><span class="tb"><svg><use href="#i-wfs"/></svg></span><svg class="drop"><use href="#chev"/></svg></div>
      <span class="tb"><svg><use href="#i-comma"/></svg></span>
      <span class="tb"><svg><use href="#i-shape"/></svg></span>
      <div class="pair"><span class="tb"><svg><use href="#i-box"/></svg></span><svg class="drop"><use href="#chev"/></svg></div>
      <i class="hgrip end"></i>
    </div>

    <div class="layers">
      <div class="layers-title"><span>Layers Panel</span>
        <svg class="tiny" viewBox="0 0 10 10"><path d="M5 1l4 4-4 4-4-4z" fill="none" stroke="#777"/></svg>
        <svg class="tiny" viewBox="0 0 10 10"><path d="M1 1l8 8M9 1L1 9" stroke="#777"/></svg>
      </div>
      <div class="layers-tools">
        <svg><use href="#i-brush"/></svg><svg><use href="#i-group"/></svg><svg><use href="#i-eye"/></svg><svg><use href="#i-funnel"/></svg><svg><use href="#i-epsf"/></svg>
        <svg class="drop"><use href="#chev"/></svg>
        <svg class="more" viewBox="0 0 12 16"><path d="M2 2l6.500 6L2 14" fill="none" stroke="#333" stroke-width="1.800"/></svg>
      </div>
      <div class="tree">
        <div class="tree-root"><svg class="branch" viewBox="0 0 22 34"><path d="M10.500 0v10M16 17.500h5" stroke="#bfc1c3"/><path d="M6.500 15.500l4 4 4-4" fill="none" stroke="#3c4044" stroke-width="1.200"/></svg><i class="check"></i><svg class="ras"><use href="#i-rastsm"/></svg><b>test_data</b></div>
        <div class="leaf"><i class="sw c44"></i>44</div>
        <div class="leaf"><i class="sw c47"></i>47</div>
        <div class="leaf"><i class="sw c50"></i>50</div>
        <div class="leaf last"><i class="sw c53"></i>53</div>
      </div>
    </div>

    <div class="canvas">
      <svg viewBox="330 99 1439 839" shape-rendering="crispEdges">
        <path class="red" d="M359 368H395V386H412V422H395V476H430V512H448V530H484V548H502V566H520V584H538V602H556V620H484V638H448V620H430V638H412V674H377V692H359V674H341V692H330V458H341V404H359z"/>
        <path class="red" d="M502 386H520V404H502zM538 368H556V404H565V458H520V422H538zM484 440H502V458H520V512H466V494H484z"/>
        <path class="orange" d="M466 368H484V404H502V422H520V458H502V440H484V458H466V530H448V494H430V458H412V440H395V422H430V404H466z"/>
        <path class="orange" d="M520 350H565V386H556V368H538V404H520zM520 458H565V566H556V584H520V566H502V548H484V512H520zM538 620H565V692H556V638H538zM682 99H718V116H736V122H682zM808 99H844V122H700V116H808z"/>
        <path class="teal" d="M430 278H448V314H430V332H412V296H430zM430 368H448V404H430V422H412V386H430zM628 99H682V116H664V122H628z"/>
        <path class="blue" d="M412 278h18v18h-18zM430 314h18v18h-18zM395 296h17v54h-17zM395 368h17v18h-17zM448 368h18v18h-18zM610 99h18v17h-18zM736 99h18v17h-18z"/>
        <path class="amber" d="M377 332h18v18h17v18h-35zM538 548h18v18h-18zM556 566h9v18h-9zM556 602h9v18h-9zM718 99h18v17h-18zM772 99h18v17h-18zM664 116h36v6h-36z"/>
      </svg>
    </div>
  </div>
</div>

<div class="dialog">
  <div class="titlebar"><span class="caption">Layer Properties - test_data | Style</span>
    <svg class="wm" viewBox="0 0 74 20"><path d="M5 7l6 6 6-6M32 13l6-6 6 6" fill="none" stroke="#e6e8ea" stroke-width="1.400"/><circle cx="65" cy="10" r="9.300" fill="#e6e8ea"/><path d="M60.500 5.500l9 9M69.500 5.500l-9 9" stroke="#53585c" stroke-width="1.300"/></svg>
  </div>
  <div class="dialog-body">
    <div class="nav">
      <div class="nav-item"><svg><use href="#i-tools"/></svg>General</div>
      <div class="nav-item current"><svg><use href="#i-style"/></svg>Style</div>
      <div class="nav-item"><svg><use href="#i-transp"/></svg>Transparency</div>
      <div class="nav-item"><svg><use href="#i-pyr"/></svg>Pyramids</div>
      <div class="nav-item"><svg><use href="#i-hist"/></svg>Histogram</div>
      <div class="nav-item"><svg><use href="#i-info"/></svg>Metadata</div>
      <div class="nav-item"><svg><use href="#i-legend"/></svg>Legend</div>
    </div>
    <div class="page">
      <div class="frame">
        <div class="heading"><svg class="tri" viewBox="0 0 12 12"><path d="M1 3.500h10L7.500 9h-3z" fill="#232629"/></svg><b>Band rendering</b></div>
        <div class="row render"><label>Render type</label><div class="marked"><div class="combo flat">Singleband pseudocolor<svg><use href="#chev"/></svg></div></div></div>
        <div class="row band"><label>Band</label><div class="combo grow">Band 1 (Gray)<svg><use href="#chev"/></svg></div></div>
        <div class="row minmax"><label></label><span class="min">Min</span><div class="input">44</div><span class="max">Max</span><div class="input">53</div></div>
        <div class="heading load"><svg class="tri" viewBox="0 0 12 12"><path d="M3 .5l6 4.500v2L3 11.500z" fill="#232629"/></svg><b>Load min/max values</b></div>
        <div class="row interp"><label>Interpolation</label><div class="combo grow">Linear<svg><use href="#chev"/></svg></div></div>
        <div class="row color"><label>Color</label><div class="combo ramp"><i class="spectral"></i>Spectral<svg><use href="#chev"/></svg></div><div class="button edit">Edit</div><i class="box"></i><span>Invert</span></div>
        <div class="row two"><label>Label unit<br>suffix</label><div class="input grow"></div></div>
        <div class="row two"><label>Min / max<br>origin:</label><span class="origin">Estimated min / max of full extent.</span></div>
        <div class="table">
          <div class="thead"><span class="c1">Value</span><span class="c2"><span>Color</span></span><span class="c3">Label</span></div>
          <div class="tr"><span class="c1">44</span><i class="c44"></i><span class="c3">44</span></div>
          <div class="tr"><span class="c1">47</span><i class="c47"></i><span class="c3">47</span></div>
          <div class="tr"><span class="c1">50</span><i class="c50"></i><span class="c3">50</span></div>
          <div class="tr last"><span class="c1">53</span><i class="c53"></i><span class="c3">53</span></div>
          <div class="marker"></div>
        </div>
        <div class="row mode"><span class="mode-label">Mode</span><div class="combo modes">Continuous<svg><use href="#chev"/></svg></div><span class="classes">Classes</span><div class="input spin">5<svg viewBox="0 0 12 20"><path d="M1.500 7L6 2.500 10.500 7M1.500 13L6 17.500l4.500-4.500" fill="none" stroke="#4c5054" stroke-width="1.200"/></svg></div></div>
        <div class="row classify"><div class="button cls">Classify</div><div class="button sm"><svg><use href="#i-add"/></svg></div><div class="button sm"><svg><use href="#i-rem"/></svg></div><div class="button sm"><svg><use href="#i-refresh"/></svg></div><div class="button sm"><svg><use href="#i-open"/></svg></div><div class="button sm"><svg><use href="#i-saveas"/></svg></div></div>
      </div>
      <div class="scroll"></div>
    </div>
  </div>
</div>
</body>
</html>
```

FILE: styles.css
```css
* { box-sizing: border-box; }
body {
  margin: 0;
  width: 1769px;
  height: 938px;
  overflow: hidden;
  background: #eff0f1;
  color: #31363b;
  font: 22.7px/26px "DejaVu Sans", sans-serif;
}
svg { display: block; flex: none; }
i { flex: none; }
.sprite { display: none; }
.gradients { position: absolute; width: 0; height: 0; }

.window { display: flex; flex-direction: column; width: 1769px; height: 938px; border-top: 1px solid #3daee9; }
.toolbars { height: 97px; flex: none; }
.toolrow { display: flex; align-items: center; height: 48px; }
.tb { display: flex; align-items: center; justify-content: center; width: 44px; height: 44px; flex: none; }
.tb svg { width: 32px; height: 32px; }
.tb.active { width: 42px; height: 42px; margin: 0 1px; background: #c9cacb; border-radius: 2px; }
.drop { width: 12px; height: 12px; margin: 0 4px; }
.grip { width: 4px; height: 44px; margin: 0 3px 0 7px; border-left: 1px solid #bcbec0; border-right: 1px solid #bcbec0; }
.grip.first { margin: 0 3px; }

.workspace { display: flex; flex: 1; min-height: 0; }
.sidetools { width: 64px; margin-right: 3px; flex: none; }
.hgrip { display: block; height: 4px; margin: 4px 0 3px; border-top: 1px solid #bcbec0; border-bottom: 1px solid #bcbec0; }
.hgrip.end { margin-top: 7px; }
.pair { display: flex; align-items: center; }

.layers { display: flex; flex-direction: column; width: 259px; flex: none; border: 1px solid #bcbec0; border-bottom: 0; border-radius: 3px 3px 0 0; background: #f3f4f6; }
.layers-title { display: flex; align-items: center; height: 28px; padding-left: 4px; }
.layers-title span { width: 211px; flex: none; white-space: nowrap; }
.tiny { width: 10px; height: 10px; margin-right: 13px; }
.layers-tools { display: flex; align-items: center; height: 43px; padding: 1px 0 0 9px; }
.layers-tools svg { width: 22px; height: 22px; margin-right: 14px; }
.layers-tools .drop { width: 12px; height: 12px; margin: 0 40px 0 -3px; }
.layers-tools .more { width: 12px; height: 16px; margin: 0; }
.tree { flex: 1; margin: 0 1px; border: 1px solid #bcbec0; border-bottom: 0; border-radius: 2px 2px 0 0; background: #fcfcfc; }
.tree-root { display: flex; align-items: center; height: 34px; color: #000; }
.tree-root b { text-decoration: underline; text-decoration-thickness: 1px; text-underline-offset: 3px; text-decoration-skip-ink: none; }
.branch { width: 22px; height: 34px; margin-left: -1px; }
.check { width: 16px; height: 16px; margin: 0 8px 0 4px; border: 1px solid #3daee9; border-radius: 2px; background: #3daee9; box-shadow: inset 0 0 0 2px #fcfcfc; }
.ras { width: 16px; height: 16px; margin-right: 6px; }
.leaf { display: flex; align-items: center; height: 34px; margin-left: 29px; background: linear-gradient(#bfc1c3, #bfc1c3) 0 0/1px 34px no-repeat, linear-gradient(#bfc1c3, #bfc1c3) 0 16px/11px 1px no-repeat; }
.leaf.last { background-size: 1px 17px, 11px 1px; }
.sw { width: 16px; height: 16px; margin: 0 6px 0 14px; }
.c44 { background: #d7191c; }
.c47 { background: #fec980; }
.c50 { background: #c7e8ad; }
.c53 { background: #2b83ba; }

.canvas { flex: 1; margin-left: 3px; border: solid #3daee9; border-width: 1px 0 0 1px; background: #fff; overflow: hidden; }
.canvas svg { width: 1439px; height: 839px; }
.red { fill: #d7191c; }
.orange { fill: #f18e5f; }
.teal { fill: #61a4b4; }
.blue { fill: #2b83ba; }
.amber { fill: #fec980; }

/* floating properties window */
.dialog { position: absolute; left: 565px; top: 122px; width: 1204px; height: 816px; background: #eff0f1; box-shadow: 0 0 10px 1px rgba(0, 0, 0, .75); clip-path: inset(-20px 0 0 -20px); }
.titlebar { display: flex; align-items: center; height: 32px; padding-left: 427px; background: #5c6065; border-bottom: 1px solid #3f8fc0; color: #e6e8ea; }
.caption { width: 698px; flex: none; font-size: 18px; font-weight: bold; padding-bottom: 3px; }
.wm { width: 74px; height: 20px; margin: -3px 0 0 2px; }
.dialog-body { display: flex; height: 784px; }
.nav { width: 202px; flex: none; background: #5c5c5c; color: #fff; }
.nav-item { display: flex; align-items: center; height: 48px; padding-left: 4px; white-space: nowrap; }
.nav-item svg { width: 34px; height: 32px; margin-right: 7px; }
.nav-item.current { padding-left: 7px; background: #eff0f1; color: #000; }
.page { display: flex; flex: 1; padding: 10px 0 0 8px; }
.frame { width: 976px; height: 774px; overflow: hidden; padding-left: 4px; border: solid #bcbec0; border-width: 1px 0 0 1px; border-radius: 3px 0 0 0; background: #f3f4f6; }
.scroll { width: 6px; height: 691px; margin-left: 7px; border-radius: 3px; background: #8f9396; }
.heading { display: flex; align-items: center; height: 26px; margin-left: -4px; color: #3a3a3a; }
.tri { width: 12px; height: 12px; margin-right: 10px; }
.load { margin: 9px 0 0 1px; }
.row { display: flex; align-items: center; height: 40px; margin-top: 8px; white-space: nowrap; }
.row label { width: 153px; margin-left: -1px; flex: none; }
.row .grow { flex: 1; }
.combo, .button, .input { display: flex; align-items: center; height: 40px; border: 1px solid #b6b8ba; border-radius: 3px; }
.combo, .button { background: linear-gradient(#f1f2f3, #e7e8ea); box-shadow: 0 1px 0 #cfd1d3; }
.combo { padding: 0 4px 0 5px; }
.combo svg { width: 12px; height: 12px; margin-left: auto; }
.input { padding-left: 7px; border-color: #bdbfc1; background: #fcfcfc; }
.button { justify-content: center; }
.render { height: 38px; margin-top: 18px; }
.row.render label { width: 149px; padding: 0 0 4px 9px; }
.marked { width: 314px; height: 39px; padding: 4px; border: 3px solid #f00; }
.combo.flat { width: 301px; height: 25px; margin-left: -1px; padding: 0 4px 0 0; text-indent: -1px; }
.band { margin-top: 2px; }
.min { width: 172px; margin-left: -1px; }
.minmax .input { width: 235px; }
.max { width: 171px; margin-left: 7px; }
.interp { margin-top: 13px; }
.color { height: 42px; }
.combo.ramp { width: 268px; padding-left: 6px; }
.spectral { width: 50px; height: 16px; margin-right: 3px; background: linear-gradient(90deg, #d7191c, #fdae61 25%, #ffffbf 50%, #abdda4 75%, #2b83ba); }
.edit { width: 268px; height: 42px; margin-left: 8px; padding-right: 1px; }
.box { width: 16px; height: 16px; margin: 0 6px 0 8px; border: 1px solid #7b7f83; border-radius: 2px; background: #f7f8f9; }
.two { height: 52px; }
.origin { margin-left: -1px; }
.table { position: relative; height: 248px; margin-top: 8px; border: 1px solid #bcbec0; background: #fcfcfc; }
.thead { display: flex; height: 40px; line-height: 40px; border-bottom: 1px solid #d5d7d9; background: #eff0f1; }
.thead .c1 { width: 100px; padding-left: 6px; border-right: 1px solid #c8cacc; }
.thead .c2 { width: 50px; padding: 0 5px 0 6px; border-right: 1px solid #c8cacc; }
.c2 span { display: block; overflow: hidden; height: 39px; }
.thead .c3 { padding-left: 6px; }
.tr { display: flex; height: 34px; line-height: 34px; }
.tr .c1 { width: 91px; padding-left: 14px; margin-left: 9px; background: linear-gradient(#bfc1c3, #bfc1c3) 0 0/1px 34px no-repeat, linear-gradient(#bfc1c3, #bfc1c3) 0 16px/11px 1px no-repeat; color: #232629; }
.tr.last .c1 { background-size: 1px 17px, 11px 1px; }
.tr i { width: 50px; height: 34px; }
.tr .c3 { padding-left: 3px; color: #a0a2a4; }
.marker { position: absolute; left: -2px; top: -4px; width: 83px; height: 191px; border: 3px solid #f00; }
.mode-label { margin-left: -1px; }
.modes { width: 183px; margin-left: 7px; }
.classes { margin-left: auto; }
.spin { width: 110px; margin-left: 8px; }
.spin svg { width: 12px; height: 20px; margin: 0 4px 0 auto; }
.classify { height: 42px; }
.cls { width: 102px; height: 42px; padding-right: 1px; }
.sm { width: 29px; height: 30px; margin-left: 8px; }
.cls + .sm { margin-left: 7px; }
.sm svg { width: 16px; height: 16px; }
```
